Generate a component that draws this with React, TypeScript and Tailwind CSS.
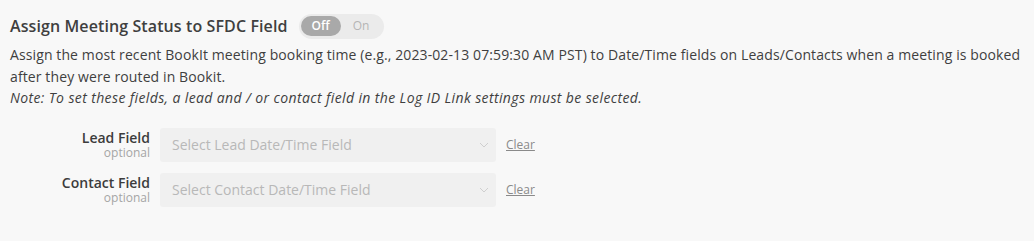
import React from "react";

function Chevron() {
  return (
    <svg width="10" height="6" viewBox="0 0 10 6" fill="none" className="shrink-0">
      <path d="M1 1l4 4 4-4" stroke="#cfcfcf" strokeWidth="1" />
    </svg>
  );
}

function FieldRow({ label, placeholder }: { label: string; placeholder: string }) {
  return (
    <div className="flex items-center">
      <div className="w-[150px] flex flex-col items-end pr-[10px]">
        <span className="text-[14px] font-semibold text-[#3c3c3c] leading-[17px]">{label}</span>
        <span className="text-[12px] text-[#a5a5a5] leading-[14px]">optional</span>
      </div>
      <div className="w-[336px] h-[34px] bg-[#f0f0f0] rounded-[3px] flex items-center justify-between pl-[12px] pr-[7px]">
        <span className="text-[14px] text-[#b8b8b8]">{placeholder}</span>
        <Chevron />
      </div>
      <span className="ml-[10px] text-[12px] text-[#8a8a8a] underline">Clear</span>
    </div>
  );
}

export default function App() {
  return (
    <div
      className="w-[1034px] h-[241px] bg-[#f8f8f8] text-[#444] pl-[10px] pt-[12px]"
      style={{ fontFamily: '"Open Sans", sans-serif' }}
    >
      <div className="flex items-center">
        <h2 className="text-[16px] tracking-[0.1px] font-semibold text-[#3f3f3f] leading-[28px]">
          Assign Meeting Status to SFDC Field
        </h2>
        <div className="ml-[11px] w-[85px] h-[25px] bg-[#ebebeb] rounded-full flex items-center p-[2px]">
          <div className="w-[40px] h-[20px] bg-[#a9a9a9] rounded-full flex items-center justify-center text-[12px] font-semibold text-white">
            Off
          </div>
          <div className="flex-1 text-center text-[12px] text-[#b5b5b5]">On</div>
        </div>
      </div>
      <div className="mt-[4px] text-[14px] leading-[21.5px] text-[#3f3f3f]">
        <p className="tracking-[0.11px]">
          Assign the most recent BookIt meeting booking time (e.g., 2023-02-13 07:59:30 AM PST) to Date/Time fields on Leads/Contacts when a meeting is booked
          <br />
          after they were routed in Bookit.
        </p>
        <p className="italic tracking-[0.38px]">
          Note: To set these fields, a lead and / or contact field in the Log ID Link settings must be selected.
        </p>
      </div>
      <div className="mt-[19px] flex flex-col gap-[11px]">
        <FieldRow label="Lead Field" placeholder="Select Lead Date/Time Field" />
        <FieldRow label="Contact Field" placeholder="Select Contact Date/Time Field" />
      </div>
    </div>
  );
}
